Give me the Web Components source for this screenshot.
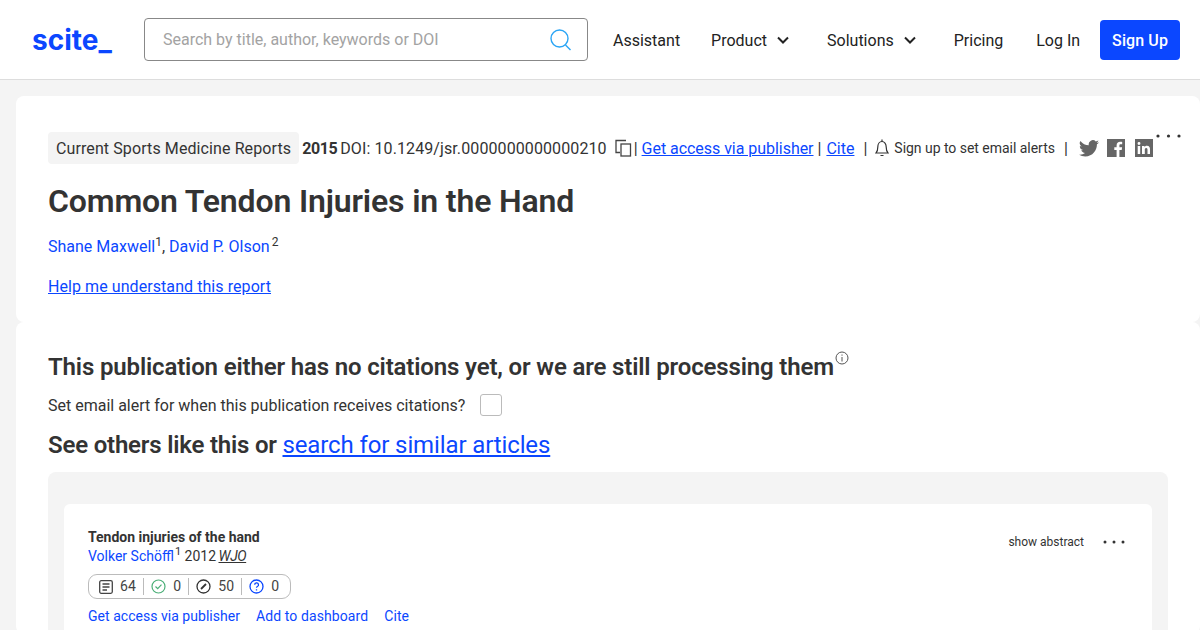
<!DOCTYPE html>
<html>
<head>
<meta charset="utf-8">
<style>
  html, body { margin: 0; height: 630px; overflow: hidden; background: #f4f4f4; font-family: Roboto, "Liberation Sans", sans-serif; color: #333; }
</style>
</head>
<body>
<site-header></site-header>
<main-page></main-page>
<script>
const BLUE = '#0b47ff';

class SiteHeader extends HTMLElement {
  constructor() {
    super();
    this.attachShadow({ mode: 'open' });
    this.shadowRoot.innerHTML = `
<style>
  :host { display: flex; align-items: center; height: 79px; border-bottom: 1px solid #ddd; background: #fff; padding: 0 20px 0 32px; font-size: 16px; color: #222; }
  .logo { width: 112px; font: 700 28px/1 Inter, sans-serif; color: ${BLUE}; }
  .search { width: 444px; height: 43px; box-sizing: border-box; border: 1px solid #888; border-radius: 4px; display: flex; align-items: center; justify-content: space-between; padding: 0 14px 0 18px; color: #a3a3a3; }
  nav { flex: 1; display: flex; align-items: center; margin-left: 25px; }
  nav span { display: flex; align-items: center; gap: 9px; padding-top: 1px; }
  nav .product { margin-left: 31px; }
  nav .solutions { margin-left: 37px; }
  nav .pricing { margin-left: 37px; }
  nav .login { margin-left: 33px; }
  .signup { margin-left: auto; background: ${BLUE}; color: #fff; font-weight: 500; height: 39px; padding: 1px 12px 0; border-radius: 4px; letter-spacing: .1px; }
</style>
<div class="logo">scite_</div>
<div class="search">Search by title, author, keywords or DOI
  <svg width="24" height="24" viewBox="0 0 24 24" fill="none" stroke="#2aa5f5" stroke-width="1.4"><circle cx="10.5" cy="10.5" r="8.5"/><path d="M16.5 17l5 5"/></svg>
</div>
<nav>
  <span>Assistant</span>
  <span class="product">Product <svg width="14" height="14" viewBox="0 0 14 14" fill="none" stroke="#222" stroke-width="2"><path d="M2 4.5l5 5 5-5"/></svg></span>
  <span class="solutions">Solutions <svg width="14" height="14" viewBox="0 0 14 14" fill="none" stroke="#222" stroke-width="2"><path d="M2 4.5l5 5 5-5"/></svg></span>
  <span class="pricing">Pricing</span>
  <span class="login">Log In</span>
  <span class="signup">Sign Up</span>
</nav>`;
  }
}

class ReportCard extends HTMLElement {
  constructor() {
    super();
    this.attachShadow({ mode: 'open' });
    this.shadowRoot.innerHTML = `
<style>
  :host { display: block; position: relative; background: #fff; border-radius: 8px; margin-left: 16px; padding: 36px 32px 0; height: 226px; box-sizing: border-box; font-size: 16px; }
  a { color: ${BLUE}; }
  .nolink { text-decoration: none; }
  .meta { display: flex; align-items: center; height: 32px; white-space: nowrap; }
  .journal { background: #f4f4f4; border-radius: 4px; padding: 0 8px; height: 32px; line-height: 33px; margin-right: 3px; letter-spacing: .1px; }
  .meta b { letter-spacing: -.4px; }
  .small { font-size: 14px; letter-spacing: -.03px; }
  .meta svg { flex: none; }
  h1 { font: 600 32px/40px Roboto, sans-serif; margin: 17px 0 0; color: #333; letter-spacing: -.15px; }
  .authors { margin-top: 14px; height: 24px; line-height: 24px; }
  sup { font-size: 12px; line-height: 0; color: #333; }
  .help { display: block; margin-top: 16px; line-height: 24px; letter-spacing: .07px; }
  .dots { position: absolute; right: 19px; top: 38px; }
</style>
<div class="meta">
  <span class="journal">Current Sports Medicine Reports</span>
  <b>2015</b><span style="margin-left:3px;letter-spacing:.1px">DOI: 10.1249/jsr.0000000000000210</span>
  <svg style="margin-left:8px" width="17" height="18" viewBox="0 0 17 18" fill="none" stroke="#444" stroke-width="1.3"><path d="M11 1.500H1v12h4"/><rect x="6" y="5" width="9.500" height="12"/></svg>
  <span style="margin:0 4px 0 2px">|</span><a href="#" style="letter-spacing:-.04px">Get access via publisher</a><span style="margin:0 5px 0 4px">|</span><a href="#">Cite</a>
  <span style="margin:0 8px 0 9px">|</span>
  <svg width="14" height="18" viewBox="0 0 14 18" fill="none" stroke="#333" stroke-width="1.2"><path d="M1 14c1.500-1.500 1.800-3 1.800-6 0-3 1.800-5.500 4.200-5.500s4.200 2.500 4.200 5.500c0 3 .3 4.500 1.800 6z"/><path d="M7 .5v2M5.500 16.500h3"/></svg>
  <span class="small" style="margin-left:5px">Sign up to set email alerts</span>
  <span style="margin:0 11px 0 9px">|</span>
  <svg width="20" height="17" viewBox="0 0 24 20" fill="#666"><path d="M24 2.400a9.800 9.800 0 0 1-2.800.8A5 5 0 0 0 23.300.5a9.900 9.900 0 0 1-3.100 1.200 4.900 4.900 0 0 0-8.400 4.500A14 14 0 0 1 1.700.9a4.900 4.900 0 0 0 1.500 6.600 4.900 4.900 0 0 1-2.200-.6v.1a4.900 4.900 0 0 0 3.900 4.800 5 5 0 0 1-2.200.1 4.900 4.900 0 0 0 4.600 3.400A9.900 9.900 0 0 1 0 17.400 14 14 0 0 0 7.500 19.600c9.100 0 14-7.500 14-14v-.6A10 10 0 0 0 24 2.400z"/></svg>
  <svg style="margin-left:8px" width="18" height="18" viewBox="0 0 18 18"><rect width="18" height="18" fill="#666"/><path fill="#fff" d="M12.400 18v-7h2.300l.4-2.700h-2.700V6.600c0-.8.200-1.300 1.400-1.300h1.400V2.900c-.3 0-1.100-.1-2.100-.1-2.100 0-3.500 1.300-3.500 3.600v1.900H7.300V11h2.300v7z"/></svg>
  <svg style="margin-left:10px" width="18" height="18" viewBox="0 0 18 18"><rect width="18" height="18" fill="#666"/><path fill="#fff" d="M2.700 7h2.500v8H2.700zM4 3a1.400 1.400 0 1 1 0 2.900A1.400 1.400 0 0 1 4 3zM7 7h2.400v1.100c.4-.7 1.300-1.300 2.500-1.300 2.600 0 3.100 1.700 3.100 3.900V15h-2.500v-3.800c0-.9 0-2.100-1.300-2.100s-1.400 1-1.400 2V15H7z"/></svg>
</div>
<svg class="dots" width="25" height="4" viewBox="0 0 25 4" fill="#333"><circle cx="2" cy="2" r="1.600"/><circle cx="12.500" cy="2" r="1.600"/><circle cx="23" cy="2" r="1.600"/></svg>
<h1>Common Tendon Injuries in the Hand</h1>
<div class="authors"><a class="nolink" href="#">Shane Maxwell</a><sup>1</sup>, <a class="nolink" href="#">David P. Olson</a><sup style="margin-left:2px">2</sup></div>
<a class="help" href="#">Help me understand this report</a>`;
  }
}

class PaperItem extends HTMLElement {
  constructor() {
    super();
    this.attachShadow({ mode: 'open' });
    this.shadowRoot.innerHTML = `
<style>
  :host { display: block; position: relative; background: #fff; border-radius: 6px; padding: 24px; height: 200px; box-sizing: border-box; font-size: 14px; line-height: 19px; }
  a { color: ${BLUE}; text-decoration: none; }
  .title { font-weight: 700; color: #333; }
  sup { font-size: 11px; line-height: 0; margin-left: 1px; }
  i { text-decoration: underline; margin-left: -1px; letter-spacing: -.4px; }
  .right { position: absolute; right: 27px; top: 29px; display: flex; align-items: center; gap: 19px; font-size: 12px; color: #333; }
  .right svg { margin-bottom: 2px; }
  .tally { display: inline-flex; align-items: center; height: 25px; margin-top: 8px; padding: 0 11px 0 10px; box-sizing: border-box; border: 1px solid #bbb; border-radius: 9px; color: #444; letter-spacing: .2px; }
  .tally span { display: flex; align-items: center; gap: 7px; padding: 0 7px; border-left: 1px solid #bbb; height: 17px; }
  .tally span:first-child { border-left: 0; padding-left: 0; }
  .tally span:last-child { padding-right: 0; }
  .links { display: flex; gap: 16px; margin-top: 8px; letter-spacing: .03px; }
  .links .dash { letter-spacing: .1px; }
</style>
<div class="title">Tendon injuries of the hand</div>
<div><a href="#">Volker Schöffl</a><sup>1</sup> 2012 <i>WJO</i></div>
<div class="tally">
  <span><svg width="14" height="14" viewBox="0 0 14 14" fill="none" stroke="#444" stroke-width="1.300"><rect x=".7" y=".7" width="12.600" height="12.600" rx="1.500"/><path d="M3.500 4h7M3.500 7h7M3.500 10h4.500"/></svg>64</span>
  <span><svg width="15" height="15" viewBox="0 0 15 15" fill="none" stroke="#4caf78" stroke-width="1.200"><circle cx="7.500" cy="7.500" r="6.500"/><path d="M4.500 7.500l2.200 2.200 3.800-4"/></svg>0</span>
  <span><svg width="15" height="15" viewBox="0 0 15 15" fill="none" stroke="#333" stroke-width="1.300"><circle cx="7.500" cy="7.500" r="6.500"/><path d="M5 10l5-5" stroke-width="1.800"/></svg>50</span>
  <span><svg width="15" height="15" viewBox="0 0 15 15" fill="none" stroke="${BLUE}" stroke-width="1.300"><circle cx="7.500" cy="7.500" r="6.500"/><path d="M5.700 5.800a1.900 1.900 0 1 1 2.700 1.700c-.6.300-.9.700-.9 1.300M7.500 10.300v1.200"/></svg>0</span>
</div>
<div class="links"><a href="#">Get access via publisher</a><a class="dash" href="#">Add to dashboard</a><a href="#">Cite</a></div>
<div class="right">show abstract
  <svg width="22" height="4" viewBox="0 0 22 4" fill="#333"><circle cx="2" cy="2" r="1.500"/><circle cx="11" cy="2" r="1.500"/><circle cx="20" cy="2" r="1.500"/></svg>
</div>`;
  }
}

class CitationsCard extends HTMLElement {
  constructor() {
    super();
    this.attachShadow({ mode: 'open' });
    this.shadowRoot.innerHTML = `
<style>
  :host { display: block; background: #fff; border-radius: 8px; margin: 0 0 0 16px; padding: 27px 32px 0; height: 312px; box-sizing: border-box; font-size: 16px; overflow: hidden; }
  h2 { font: 600 24px/36px Roboto, sans-serif; margin: 0; color: #333; display: flex; letter-spacing: -.15px; }
  h2 svg { margin: 2px 0 0 1px; }
  .alert { display: flex; align-items: center; gap: 15px; height: 24px; margin-top: 8px; }
  .box { width: 20px; height: 20px; border: 1px solid #bbb; border-radius: 3px; }
  h3 { font: 600 24px/36px Roboto, sans-serif; margin: 10px 0 0; letter-spacing: -.2px; }
  h3 a { font-weight: 400; color: ${BLUE}; letter-spacing: -.12px; }
  .list { background: #f4f4f4; border-radius: 8px; width: 1120px; margin-top: 9px; padding: 32px 16px; box-sizing: border-box; height: 200px; }
</style>
<h2>This publication either has no citations yet, or we are still processing them
  <svg width="14" height="14" viewBox="0 0 14 14" fill="none" stroke="#555"><circle cx="7" cy="7" r="6"/><path d="M7 6v4.500M7 3.500v1.200"/></svg>
</h2>
<div class="alert">Set email alert for when this publication receives citations? <div class="box"></div></div>
<h3>See others like this or <a href="#">search for similar articles</a></h3>
<div class="list"><slot></slot></div>`;
  }
}

class MainPage extends HTMLElement {
  constructor() {
    super();
    this.attachShadow({ mode: 'open' });
    this.shadowRoot.innerHTML = `
<style>
  :host { display: block; padding-top: 16px; }
</style>
<report-card></report-card>
<citations-card><paper-item></paper-item></citations-card>`;
  }
}

customElements.define('site-header', SiteHeader);
customElements.define('report-card', ReportCard);
customElements.define('paper-item', PaperItem);
customElements.define('citations-card', CitationsCard);
customElements.define('main-page', MainPage);
</script>
</body>
</html>
